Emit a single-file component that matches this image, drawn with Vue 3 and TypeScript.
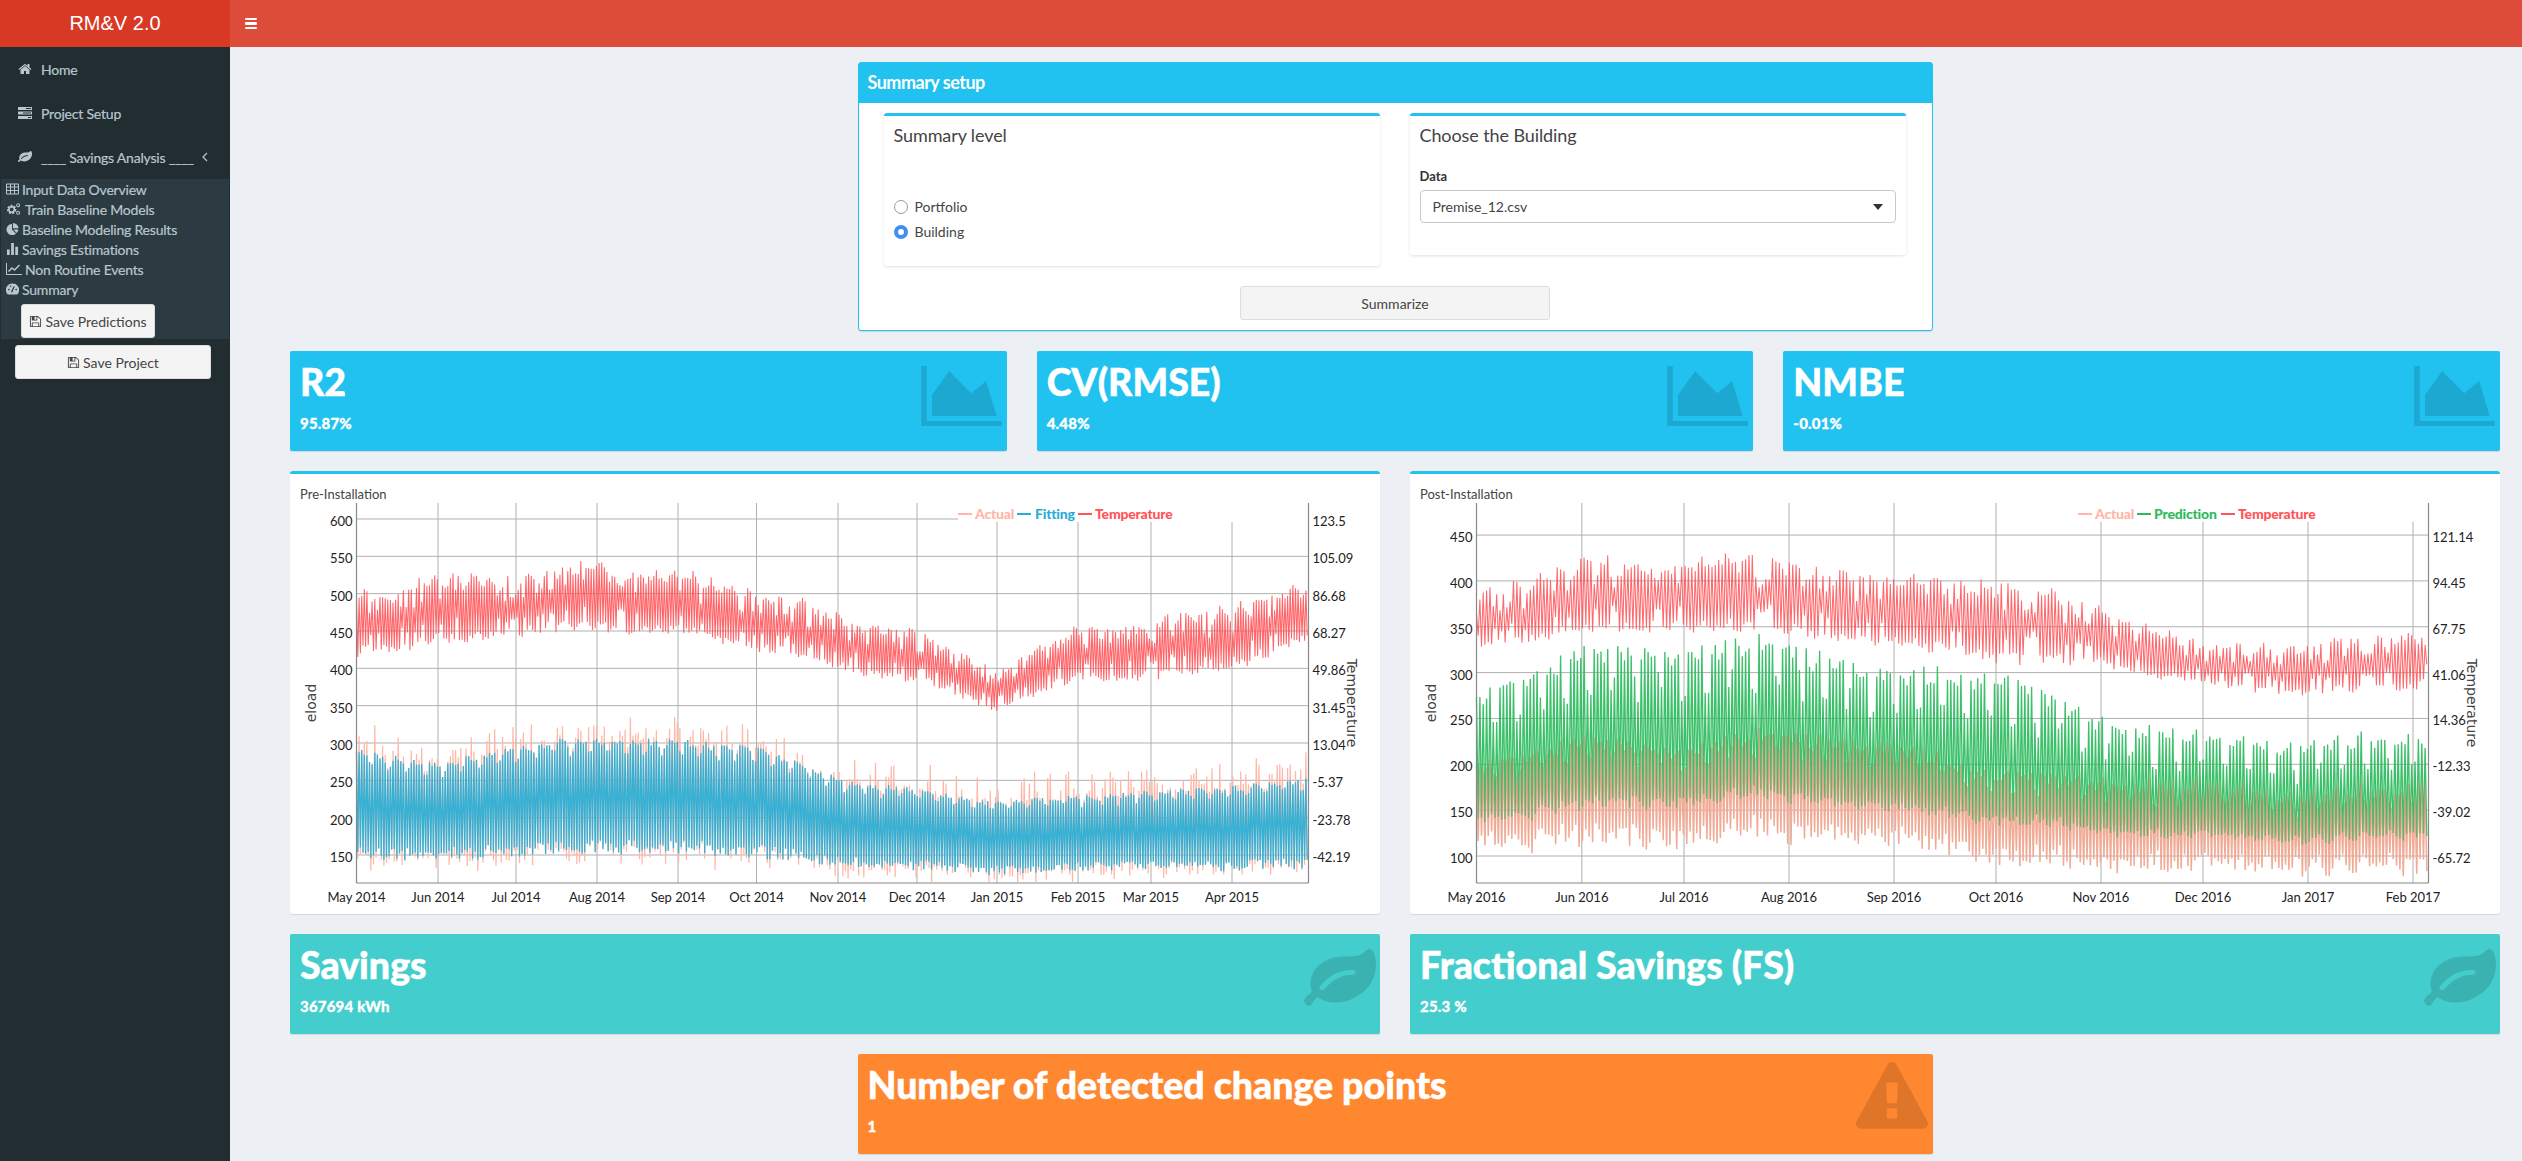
<script setup lang="ts">
type Series = { color: string; width: number; opacity: number; d: string }
type Chart = {
  title: string
  xTicks: { label: string; x: number }[]
  left: { label: string; y: number }[]
  right: string[]
  legend: { label: string; color: string; lineX: number; textX: number }[]
  legendX: number
  series: Series[]
}

const PLOT_L = 66.5
const PLOT_R = 1018.5
const PLOT_B = 380

function rng(seed: number) {
  let a = seed
  return () => {
    a = (a + 0x6d2b79f5) | 0
    let t = Math.imul(a ^ (a >>> 15), 1 | a)
    t = (t + Math.imul(t ^ (t >>> 7), 61 | t)) ^ t
    return ((t ^ (t >>> 14)) >>> 0) / 4294967296
  }
}

function at(env: number[], t: number) {
  const i = Math.min(Math.floor(t), env.length - 2)
  return env[i] + (env[i + 1] - env[i]) * (t - i)
}

type Opts = {
  seed: number
  up: number[]
  lo: number[]
  swing: number
  rough: number
  lift: number
  weekend: number
  dull?: number
  extraUp?: number
  extraLo?: number
}

function build(stops: number[], days: number, toY: (v: number) => number, o: Opts) {
  const r = rng(o.seed)
  const extra = rng(o.seed + 99)
  const dx = (PLOT_R - PLOT_L) / days
  let d = ''
  let seg = 0
  for (let i = 0; i < days; i++) {
    const x = PLOT_L + i * dx
    while (seg < stops.length - 2 && x > stops[seg + 1]) seg++
    const t = seg + (x - stops[seg]) / (stops[seg + 1] - stops[seg])
    const up = at(o.up, t)
    const lo = at(o.lo, t)
    const span = up - lo
    const slow = 0.5 + 0.3 * Math.sin(i * 0.9 + o.seed % 7) + 0.2 * Math.sin(i * 0.137)
    const a = r()
    const b = r()
    const c = r()
    let hi = up - span * (o.swing * slow + o.rough * a)
    if (i % 7 > 4) hi -= span * o.weekend * (0.6 + 0.4 * c)
    let low = lo + span * (o.lift * b + o.swing * (1 - slow) * 0.5)
    // some days barely swing at all, these leave the notches in the band
    if (o.dull && c < o.dull) {
      const mid = (hi + low) / 2
      hi = mid + (hi - mid) * 0.45
      low = mid - (mid - low) * 0.45
    }
    const ea = extra()
    const eb = extra()
    if (o.extraUp) hi += o.extraUp * ea * ea * ea
    if (o.extraLo) low -= o.extraLo * eb * eb * eb
    const yHi = Math.max(1, toY(hi))
    const yLo = Math.min(PLOT_B - 1, toY(low))
    d += `${i ? 'L' : 'M'}${x.toFixed(1)} ${yHi.toFixed(1)}L${(x + dx * 0.5).toFixed(1)} ${yLo.toFixed(1)}`
  }
  return d
}

const preStops = [356.5, 438, 516, 597, 678, 756.5, 838, 917, 997, 1078, 1151, 1232, 1308.5].map((v) => v - 290)
const preLabels = ['May 2014', 'Jun 2014', 'Jul 2014', 'Aug 2014', 'Sep 2014', 'Oct 2014', 'Nov 2014', 'Dec 2014', 'Jan 2015', 'Feb 2015', 'Mar 2015', 'Apr 2015']
const preY = (v: number) => 855 - 503 - (v - 150) * 0.7467

const postStops = [1476.5, 1581.8, 1684, 1789, 1894, 1996, 2101, 2203, 2308, 2413, 2428.5].map((v) => v - 1410)
const postLabels = ['May 2016', 'Jun 2016', 'Jul 2016', 'Aug 2016', 'Sep 2016', 'Oct 2016', 'Nov 2016', 'Dec 2016', 'Jan 2017', 'Feb 2017']
const postY = (v: number) => 856 - 503 - (v - 100) * 0.917

const blueUp = [295, 275, 300, 312, 305, 300, 255, 240, 225, 232, 238, 245, 255]
const blueLo = [142, 142, 145, 150, 150, 145, 133, 128, 122, 128, 128, 128, 130]
const blueOpts = { seed: 11, up: blueUp, lo: blueLo, swing: 0.04, rough: 0.06, lift: 0.12, weekend: 0.1 }

const peachPost = build(postStops, 283, postY, {
  seed: 41,
  up: [215, 240, 235, 250, 235, 205, 195, 190, 180, 185, 215],
  lo: [100, 105, 105, 110, 100, 85, 80, 78, 75, 75, 75],
  swing: 0.14, rough: 0.1, lift: 0.2, weekend: 0.2
})

const preChart: Chart = {
  title: 'Pre-Installation',
  xTicks: preLabels.map((label, i) => ({ label, x: preStops[i] })),
  left: [600, 550, 500, 450, 400, 350, 300, 250, 200, 150].map((v) => ({ label: String(v), y: preY(v) })),
  right: ['123.5', '105.09', '86.68', '68.27', '49.86', '31.45', '13.04', '-5.37', '-23.78', '-42.19'],
  legendX: 668,
  legend: [
    { label: 'Actual', color: '#ffb6a6', lineX: 668, textX: 685 },
    { label: 'Fitting', color: '#27aed6', lineX: 727, textX: 745 },
    { label: 'Temperature', color: '#ff5459', lineX: 788, textX: 805 }
  ],
  series: [
    {
      color: '#ffb6a6', width: 1.2, opacity: 1,
      d: build(preStops, 365, preY, { ...blueOpts, extraUp: 38, extraLo: 20 })
    },
    {
      color: '#2cb0d6', width: 1.3, opacity: 0.95,
      d: build(preStops, 365, preY, blueOpts)
    },
    {
      color: '#ff5459', width: 1.05, opacity: 0.9,
      d: build(preStops, 365, preY, {
        seed: 23,
        up: [510, 530, 535, 550, 535, 515, 480, 455, 405, 465, 470, 500, 515],
        lo: [412, 425, 440, 445, 440, 420, 395, 375, 340, 380, 380, 390, 435],
        swing: 0.2, rough: 0.14, lift: 0.12, weekend: 0, dull: 0.18
      })
    }
  ]
}

const postChart: Chart = {
  title: 'Post-Installation',
  xTicks: postLabels.map((label, i) => ({ label, x: postStops[i] })),
  left: [450, 400, 350, 300, 250, 200, 150, 100].map((v) => ({ label: String(v), y: postY(v) })),
  right: ['121.14', '94.45', '67.75', '41.06', '14.36', '-12.33', '-39.02', '-65.72'],
  legendX: 668,
  legend: [
    { label: 'Actual', color: '#ffb6a6', lineX: 668, textX: 685 },
    { label: 'Prediction', color: '#2bbb5c', lineX: 727, textX: 744 },
    { label: 'Temperature', color: '#ff5459', lineX: 811, textX: 828 }
  ],
  series: [
    { color: '#ffb6a6', width: 1.4, opacity: 1, d: peachPost },
    {
      color: '#2bbb5c', width: 1.35, opacity: 0.92,
      d: build(postStops, 283, postY, {
        seed: 41,
        up: [295, 340, 350, 350, 315, 320, 262, 240, 235, 240, 242],
        lo: [130, 145, 150, 155, 140, 130, 120, 115, 110, 115, 120],
        swing: 0.12, rough: 0.1, lift: 0.06, weekend: 0.3
      })
    },
    { color: '#d99a80', width: 1.4, opacity: 0.4, d: peachPost },
    {
      color: '#ff5459', width: 1.05, opacity: 0.88,
      d: build(postStops, 283, postY, {
        seed: 57,
        up: [398, 428, 433, 433, 408, 413, 378, 335, 340, 350, 355],
        lo: [322, 337, 342, 337, 322, 307, 302, 282, 272, 277, 297],
        swing: 0.2, rough: 0.14, lift: 0.12, weekend: 0, dull: 0.18
      })
    }
  ]
}

const charts = [preChart, postChart]

const kpis = [
  { title: 'R2', value: '95.87%' },
  { title: 'CV(RMSE)', value: '4.48%' },
  { title: 'NMBE', value: '-0.01%' }
]
const savings = [
  { title: 'Savings', value: '367694 kWh' },
  { title: 'Fractional Savings (FS)', value: '25.3 %' }
]

const leaf = 'M1280 704q0-26-19-45t-45-19q-172 0-318 49.5t-259.5 134-235.5 219.5q-19 21-19 45 0 26 19 45t45 19q24 0 45-19 27-24 74-71t67-66q137-124 268.5-176t313.5-52q26 0 45-19t19-45zm512-198q0 95-20 193-46 224-184.5 383t-357.5 268q-214 108-438 108-148 0-286-47-15-5-88-42t-96-37q-16 0-39.5 32t-45 70-52.5 70-60 32q-43 0-63.5-17.5t-45.5-59.5q-2-4-6-11t-5.5-10-3-9.5-1.5-13.5q0-35 31-73.5t68-65.5 68-56 31-48q0-4-14-38t-16-44q-9-51-9-104 0-115 43.5-220t119-184.5 170.5-139 204-95.5q55-18 145-25.5t179.5-9 178.5-6 163.5-24 113.5-56.5l29.5-29.5 29.5-28 27-20 36.5-16 43.5-4.5q39 0 70.5 46t47.5 112 24 124 8 96z'
const floppy = 'M512 1536h768v-384h-768v384zm896 0h128v-896q0-14-10-38.5t-20-34.5l-281-281q-10-10-34-20t-39-10v416q0 40-28 68t-68 28h-576q-40 0-68-28t-28-68v-416h-128v1280h128v-416q0-40 28-68t68-28h832q40 0 68 28t28 68v416zm-384-928v-320q0-13-9.5-22.5t-22.5-9.5h-192q-13 0-22.5 9.5t-9.5 22.5v320q0 13 9.5 22.5t22.5 9.5h192q13 0 22.5-9.5t9.5-22.5zm640 32v928q0 40-28 68t-68 28h-1344q-40 0-68-28t-28-68v-1344q0-40 28-68t68-28h928q40 0 88 20t76 48l280 280q28 28 48 76t20 88z'
const home = 'M1472 992v480q0 26-19 45t-45 19h-384v-384h-256v384h-384q-26 0-45-19t-19-45v-480q0-1 .5-3t.5-3l575-474 575 474q1 2 1 6zm223-69l-62 74q-8 9-21 11h-3q-13 0-21-7l-692-577-692 577q-12 8-24 7-13-2-21-11l-62-74q-8-10-7-23.5t11-21.5l719-599q32-26 76-26t76 26l244 204v-195q0-14 9-23t23-9h192q14 0 23 9t9 23v408l219 182q10 8 11 21.5t-7 23.5z'
const warning = 'M1024 1375v-190q0-14-9.5-23.5t-22.5-9.5h-192q-13 0-22.5 9.5t-9.5 23.5v190q0 14 9.5 23.5t22.5 9.5h192q13 0 22.5-9.5t9.5-23.5zm-2-374l18-459q0-12-10-19-13-11-24-11h-220q-11 0-24 11-10 7-10 21l17 457q0 10 10 16.5t24 6.5h185q14 0 23.5-6.5t10.5-16.5zm-14-934l768 1408q35 63-2 126-17 29-46.5 46t-63.5 17h-1536q-34 0-63.5-17t-46.5-46q-37-63-2-126l768-1408q17-31 47-49t65-18 65 18 47 49z'
</script>

<template>
  <div class="page">
    <aside class="sidebar">
      <div class="logo">RM&amp;V 2.0</div>
      <nav class="menu">
        <a class="item">
          <svg class="ic" viewBox="0 0 1792 1792"><path :d="home" /></svg>
          <span>Home</span>
        </a>
        <a class="item">
          <svg class="ic" viewBox="0 0 14 12">
            <path d="M0 0h14v3H0zM0 4.5h14v3H0zM0 9h14v3H0z" />
            <path d="M8 1h5v1H8zM5 5.5h8v1H5zM10 10h3v1h-3z" fill="#222d32" />
          </svg>
          <span>Project Setup</span>
        </a>
        <a class="item">
          <svg class="ic" viewBox="0 0 1792 1792"><path :d="leaf" /></svg>
          <span>____ Savings Analysis ____</span>
          <svg class="chev" viewBox="0 0 6 10"><path d="M5 1 1 5l4 4" fill="none" stroke="currentColor" stroke-width="1.2" /></svg>
        </a>
      </nav>
      <div class="submenu">
        <a class="sub">
          <svg class="sic" viewBox="0 0 13 11" fill="none" stroke="currentColor">
            <path d="M.5.5h12v10H.5zM.5 3.5h12M.5 7h12M4.5 .5v10M8.5 .5v10" />
          </svg>
          Input Data Overview
        </a>
        <a class="sub">
          <svg class="sic wide" viewBox="0 0 15 13">
            <circle cx="5.5" cy="7" r="3.6" fill="none" stroke="currentColor" stroke-width="3" stroke-dasharray="1.9 1.2" />
            <circle cx="5.5" cy="7" r="3" fill="none" stroke="currentColor" stroke-width="1.6" />
            <circle cx="12.5" cy="2.5" r="1.6" fill="none" stroke="currentColor" stroke-width="1.1" />
            <circle cx="12.5" cy="10.5" r="1.6" fill="none" stroke="currentColor" stroke-width="1.1" />
          </svg>
          Train Baseline Models
        </a>
        <a class="sub">
          <svg class="sic" viewBox="0 0 13 13">
            <path d="M6 1.2v6l4.3 4.2A6 6 0 1 1 6 1.2z" fill="currentColor" />
            <path d="M7 0a6 6 0 0 1 6 5.8H7zM7.4 7h5.5a6 6 0 0 1-1.8 3.7z" fill="currentColor" />
          </svg>
          Baseline Modeling Results
        </a>
        <a class="sub">
          <svg class="sic" viewBox="0 0 13 13" fill="currentColor">
            <path d="M.5 7h3v6h-3zM5 0h3v13H5zM9.5 4h3v9h-3z" />
          </svg>
          Savings Estimations
        </a>
        <a class="sub">
          <svg class="sic wider" viewBox="0 0 16 12" fill="none" stroke="currentColor">
            <path d="M.5 0v11.5H16" />
            <path d="M2.5 8.5 6 5l2.5 2L13.5 2" stroke-width="1.5" />
          </svg>
          Non Routine Events
        </a>
        <a class="sub">
          <svg class="sic" viewBox="0 0 14 12">
            <path d="M7 0a7 7 0 0 1 6 10.8l-1 1.2H2l-1-1.2A7 7 0 0 1 7 0z" fill="currentColor" />
            <path d="M6 9.5 8.8 3.4" stroke="#2c3b41" stroke-width="1.4" />
            <circle cx="3" cy="6.5" r=".9" fill="#2c3b41" />
            <circle cx="11" cy="6.5" r=".9" fill="#2c3b41" />
            <circle cx="5" cy="3" r=".8" fill="#2c3b41" />
          </svg>
          Summary
        </a>
        <button class="btn small">
          <svg class="sv" viewBox="0 0 1792 1792"><path :d="floppy" /></svg>
          Save Predictions
        </button>
      </div>
      <button class="btn large">
        <svg class="sv" viewBox="0 0 1792 1792"><path :d="floppy" /></svg>
        Save Project
      </button>
    </aside>

    <div class="main">
      <header class="navbar">
        <span class="toggle"><i></i><i></i><i></i></span>
      </header>

      <section class="content">
        <div class="setup">
          <div class="setup-head">Summary setup</div>
          <div class="setup-body">
            <div class="inner level">
              <h3>Summary level</h3>
              <label class="radio"><span class="dot"></span>Portfolio</label>
              <label class="radio"><span class="dot on"></span>Building</label>
            </div>
            <div class="inner building">
              <h3>Choose the Building</h3>
              <div class="field">Data</div>
              <div class="select">Premise_12.csv<span class="caret"></span></div>
            </div>
          </div>
          <button class="summarize">Summarize</button>
        </div>

        <div class="row three">
          <div v-for="k in kpis" :key="k.title" class="stat blue">
            <h3>{{ k.title }}</h3>
            <p>{{ k.value }}</p>
            <svg class="stat-ic area" viewBox="0 0 80.6 60">
              <path d="M0 0h5.6v55H80.6v5H0z" />
              <path d="M10.7 50V29L28 5l22 22.3L65 15l10.5 35z" />
            </svg>
          </div>
        </div>

        <div class="row two">
          <div v-for="c in charts" :key="c.title" class="plot">
            <div class="plot-title">{{ c.title }}</div>
            <svg class="chart" width="1090" height="408" viewBox="0 0 1090 408">
              <g class="grid">
                <line v-for="t in c.left" :key="t.label" :x1="PLOT_L" :x2="PLOT_R" :y1="t.y" :y2="t.y" />
                <line v-for="t in c.xTicks" :key="t.label" :x1="t.x" :x2="t.x" y1="0" :y2="PLOT_B" />
              </g>
              <path
                v-for="(s, i) in c.series"
                :key="i"
                :d="s.d"
                fill="none"
                :stroke="s.color"
                :stroke-width="s.width"
                :opacity="s.opacity"
              />
              <rect :x="c.legendX" y="0" :width="PLOT_R - c.legendX" height="19" fill="#fff" />
              <g class="axis">
                <line :x1="PLOT_L" :x2="PLOT_L" y1="0" :y2="PLOT_B" />
                <line :x1="PLOT_R" :x2="PLOT_R" y1="0" :y2="PLOT_B" />
                <line :x1="PLOT_L" :x2="PLOT_R" :y1="PLOT_B" :y2="PLOT_B" />
              </g>
              <g class="legend">
                <template v-for="l in c.legend" :key="l.label">
                  <line :x1="l.lineX" :x2="l.lineX + 14" y1="11" y2="11" :stroke="l.color" stroke-width="2" />
                  <text :x="l.textX" y="15.5" :fill="l.color">{{ l.label }}</text>
                </template>
              </g>
              <text v-for="t in c.left" :key="t.label" class="tick" :x="PLOT_L - 4" :y="t.y + 7" text-anchor="end">{{ t.label }}</text>
              <text v-for="(t, i) in c.right" :key="t" class="tick" :x="PLOT_R + 4" :y="c.left[i].y + 7">{{ t }}</text>
              <text v-for="t in c.xTicks" :key="t.label" class="tick" :x="t.x" y="399" text-anchor="middle">{{ t.label }}</text>
              <text class="axis-title" transform="translate(26 200) rotate(-90)" text-anchor="middle">eload</text>
              <text class="axis-title" transform="translate(1057 200) rotate(90)" text-anchor="middle">Temperature</text>
            </svg>
          </div>
        </div>

        <div class="row two">
          <div v-for="s in savings" :key="s.title" class="stat teal">
            <h3>{{ s.title }}</h3>
            <p>{{ s.value }}</p>
            <svg class="stat-ic leaf" viewBox="0 0 1792 1792"><path :d="leaf" /></svg>
          </div>
        </div>

        <div class="stat orange change">
          <h3>Number of detected change points</h3>
          <p>1</p>
          <svg class="stat-ic warn" viewBox="0 0 1792 1792"><path :d="warning" /></svg>
        </div>
      </section>
    </div>
  </div>
</template>

<style>
html,
body {
  margin: 0;
  background: #ecf0f5;
}
</style>

<style scoped>
.page {
  display: flex;
  height: 1161px;
  overflow: hidden;
  font-family: Lato, "Open Sans", sans-serif;
  font-size: 14px;
  color: #444;
}

.sidebar {
  width: 230px;
  flex: none;
  background: #222d32;
  color: #b8c7ce;
  display: flex;
  flex-direction: column;
  letter-spacing: -0.2px;
}

.logo {
  height: 47px;
  background: #d73925;
  color: #fff;
  font: 20px/47px "Liberation Sans", Arial, sans-serif;
  letter-spacing: 0;
  text-align: center;
}

.item {
  display: flex;
  align-items: center;
  height: 44px;
  padding-left: 18px;
  font-size: 14px;
  -webkit-text-stroke: 0.2px;
}

.ic {
  width: 14px;
  height: 14px;
  margin-right: 9px;
  fill: currentColor;
}

.chev {
  width: 6px;
  height: 10px;
  margin-left: 8px;
}

.submenu {
  margin: 0 1px;
  height: 160px;
  background: #2c3b41;
}

.sub {
  display: flex;
  align-items: center;
  height: 20px;
  padding-left: 5px;
  font-size: 14px;
  -webkit-text-stroke: 0.2px;
}

.sic {
  width: 13px;
  height: 12px;
  margin-right: 3px;
  flex: none;
}

.sic.wide {
  width: 15px;
  margin-right: 4px;
}

.sic.wider {
  width: 16px;
  margin-right: 3px;
}

.btn {
  display: flex;
  align-items: center;
  justify-content: center;
  gap: 3px;
  height: 34px;
  padding: 0;
  background: #f4f4f4;
  border: 1px solid #ddd;
  border-radius: 3px;
  color: #444;
  font: inherit;
}

.btn.small {
  width: 134px;
  margin: 5px 0 0 20px;
}

.btn.large {
  width: 196px;
  margin: 6px 0 0 15px;
}

.sv {
  width: 13px;
  height: 13px;
  fill: #444;
}

.main {
  flex: 1;
  min-width: 0;
}

.navbar {
  height: 47px;
  background: #dd4b39;
  display: flex;
  align-items: center;
  padding-left: 15px;
}

.toggle {
  display: flex;
  flex-direction: column;
  gap: 2px;
  width: 12px;
}

.toggle i {
  display: block;
  height: 2.4px;
  background: #fff;
  border-radius: 1px;
}

.content {
  display: flex;
  flex-direction: column;
  gap: 20px;
  padding: 15px 22px 0 60px;
}

.setup {
  align-self: center;
  width: 1075px;
  height: 269px;
  box-sizing: border-box;
  border: 1px solid #21c2f0;
  border-radius: 3px;
  background: #fff;
  box-shadow: 0 1px 1px rgba(0, 0, 0, 0.1);
  display: flex;
  flex-direction: column;
}

.setup-head {
  height: 40px;
  line-height: 38px;
  padding-left: 9px;
  background: #21c2f0;
  color: #fff;
  font-size: 18px;
  font-weight: 700;
  letter-spacing: -0.5px;
}

.setup-body {
  display: grid;
  grid-template-columns: 496px 496px;
  gap: 30px;
  align-items: start;
  padding: 10px 25px 0;
}

.inner {
  border-top: 3px solid #21c2f0;
  border-radius: 3px;
  box-shadow: 0 1px 3px rgba(0, 0, 0, 0.12);
  box-sizing: border-box;
  padding: 6px 10px 0;
}

.inner h3 {
  margin: 0;
  font-size: 18px;
  font-weight: 400;
  line-height: 26px;
  color: #444;
  letter-spacing: -0.1px;
}

.level {
  height: 153px;
}

.level h3 {
  margin-bottom: 46px;
}

.radio {
  display: flex;
  align-items: center;
  height: 25px;
  font-size: 14px;
}

.dot {
  width: 12px;
  height: 12px;
  border: 1px solid #9b9b9b;
  border-radius: 50%;
  margin-right: 7px;
  background: #fff;
}

.dot.on {
  width: 6px;
  height: 6px;
  border: 4px solid #3f8ef0;
}

.building {
  height: 142px;
}

.field {
  margin-top: 19px;
  font-size: 13px;
  font-weight: 700;
  line-height: 18px;
  color: #333;
}

.select {
  display: flex;
  align-items: center;
  justify-content: space-between;
  height: 33px;
  box-sizing: border-box;
  margin-top: 5px;
  padding: 0 12px;
  border: 1px solid #c8c8c8;
  border-radius: 4px;
  font-size: 14px;
  color: #444;
}

.caret {
  border: 5px solid transparent;
  border-top: 6px solid #333;
  border-bottom: 0;
}

.summarize {
  align-self: center;
  width: 310px;
  height: 34px;
  margin-top: 20px;
  background: #f4f4f4;
  border: 1px solid #ddd;
  border-radius: 3px;
  color: #444;
  font: inherit;
}

.row {
  display: grid;
  gap: 30px;
}

.row.three {
  grid-template-columns: repeat(3, 1fr);
}

.row.two {
  grid-template-columns: repeat(2, 1fr);
}

.stat {
  position: relative;
  height: 100px;
  box-sizing: border-box;
  padding: 10px;
  border-radius: 2px;
  box-shadow: 0 1px 1px rgba(0, 0, 0, 0.1);
  color: #fff;
  overflow: hidden;
}

.stat h3 {
  margin: 0 0 10px;
  font-size: 37.5px;
  font-weight: 900;
  line-height: 42px;
  letter-spacing: 0;
  -webkit-text-stroke: 0.5px;
  white-space: nowrap;
}

.stat p {
  margin: 0;
  font-size: 15px;
  font-weight: 900;
  line-height: 20px;
  letter-spacing: 0.2px;
  -webkit-text-stroke: 0.3px;
}

.blue {
  background: #21c2f0;
}

.teal {
  background: #43cdcc;
}

.orange {
  background: #ff8730;
}

.change {
  align-self: center;
  width: 1075px;
}

.stat-ic {
  position: absolute;
  fill: rgba(0, 0, 0, 0.13);
}

.stat-ic.area {
  right: 5px;
  top: 15px;
  width: 81px;
  height: 60px;
}

.stat-ic.leaf {
  right: 4px;
  top: 10px;
  width: 72px;
  height: 72px;
}

.stat-ic.warn {
  right: 5px;
  top: 8px;
  width: 72px;
  height: 72px;
}

.plot {
  height: 443px;
  box-sizing: border-box;
  border-top: 3px solid #21c2f0;
  border-radius: 3px;
  background: #fff;
  box-shadow: 0 1px 1px rgba(0, 0, 0, 0.1);
  padding-top: 11px;
}

.plot-title {
  height: 18px;
  line-height: 18px;
  padding-left: 10px;
  font-size: 13px;
  color: #444;
}

.chart {
  display: block;
}

.grid line {
  stroke: #b0b0b0;
  stroke-width: 1;
}

.axis line {
  stroke: #888;
  stroke-width: 1.2;
}

.tick {
  font-size: 13px;
  fill: #222;
}

.legend text {
  font-size: 14px;
  font-weight: 900;
  letter-spacing: -0.2px;
}

.axis-title {
  font-family: "DejaVu Sans", sans-serif;
  font-size: 14px;
  fill: #444;
}
</style>
